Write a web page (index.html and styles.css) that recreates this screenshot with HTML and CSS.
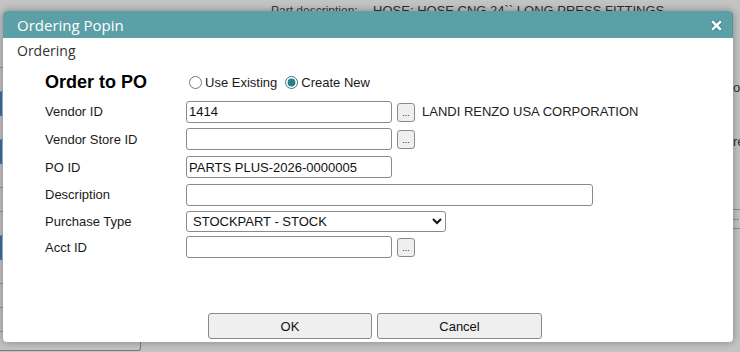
FILE: index.html
```html
<!DOCTYPE html>
<html lang="en">
<head>
  <meta charset="UTF-8">
  <title>Ordering Popin</title>
  <link rel="stylesheet" href="styles.css">
</head>
<body>

  <div class="page">
    <div class="page-top">
      <span class="page-label">Part description:</span>
      <span class="page-value">HOSE: HOSE CNG 24`` LONG PRESS FITTINGS</span>
    </div>
    <div class="page-main">
      <div class="page-left">
        <div class="strip-row"></div>
        <div class="strip-row"></div>
        <div class="strip-row blue"></div>
        <div class="strip-row"></div>
        <div class="strip-row blue"></div>
        <div class="strip-row"></div>
        <div class="strip-row"></div>
        <div class="strip-row"></div>
        <div class="strip-row blue"></div>
        <div class="strip-row"></div>
        <div class="strip-row"></div>
        <div class="strip-row"></div>
      </div>
      <div class="page-right">
        <div class="frag frag-pos">os</div>
        <div class="frag frag-store">re</div>
        <div class="frag-line"><span>..</span></div>
      </div>
    </div>
    <div class="page-bottom">
      <div class="bottom-box"></div>
    </div>
  </div>

  <div class="dialog">
    <div class="titlebar">
      <span class="title">Ordering Popin</span>
      <svg class="close" width="11" height="11" viewBox="0 0 11 11">
        <path d="M2 2 L9 9 M9 2 L2 9" stroke="#2f7d85" stroke-width="4.4" stroke-linecap="square"/>
        <path d="M2 2 L9 9 M9 2 L2 9" stroke="#ffffff" stroke-width="2.6" stroke-linecap="square"/>
      </svg>
    </div>

    <div class="dialog-body">
      <div class="section">Ordering</div>

      <div class="form">
        <div class="heading">Order to PO</div>
        <div class="radios">
          <input type="radio" name="mode" id="use-existing">
          <label for="use-existing">Use Existing</label>
          <input type="radio" name="mode" id="create-new" checked>
          <label for="create-new">Create New</label>
        </div>

        <div class="label">Vendor ID</div>
        <div class="field">
          <input class="text" type="text" value="1414">
          <button class="lookup">...</button>
          <span class="vendor-name">LANDI RENZO USA CORPORATION</span>
        </div>

        <div class="label">Vendor Store ID</div>
        <div class="field">
          <input class="text" type="text">
          <button class="lookup">...</button>
        </div>

        <div class="label">PO ID</div>
        <div class="field">
          <input class="text" type="text" value="PARTS PLUS-2026-0000005">
        </div>

        <div class="label">Description</div>
        <div class="field">
          <input class="text wide" type="text">
        </div>

        <div class="label">Purchase Type</div>
        <div class="field">
          <select class="select">
            <option>STOCKPART - STOCK</option>
          </select>
        </div>

        <div class="label">Acct ID</div>
        <div class="field">
          <input class="text" type="text">
          <button class="lookup">...</button>
        </div>
      </div>
    </div>

    <div class="dialog-footer">
      <button class="action">OK</button>
      <button class="action">Cancel</button>
    </div>
  </div>

</body>
</html>
```

FILE: styles.css
```css
body {
  margin: 0;
  padding: 0;
  width: 740px;
  height: 352px;
  overflow: hidden;
  background: #c4c4c4;
  font-family: "Liberation Sans", Arial, sans-serif;
}

/* page behind the popin */
.page {
  height: 352px;
  display: flex;
  flex-direction: column;
  color: #2e2e2e;
}

.page-top {
  height: 20px;
  padding-top: 3px;
  font-size: 12px;
  box-sizing: border-box;
}

.page-label {
  margin-left: 271px;
  color: #3a3a3a;
}

.page-value {
  margin-left: 12px;
  font-size: 13px;
}

.page-main {
  flex: 1;
  display: flex;
  justify-content: space-between;
}

.page-left {
  width: 6px;
  padding-top: 24px;
}

.strip-row {
  height: 23px;
  border-bottom: 1px solid #9a9a9a;
}

.strip-row.blue {
  border-left: 2px solid #3a6fa8;
}

.page-right {
  width: 7px;
  font-size: 13px;
  overflow: hidden;
}

.frag {
  white-space: nowrap;
}

.frag-pos {
  margin-top: 60px;
}

.frag-store {
  margin-top: 39px;
}

.frag-line {
  margin-top: 60px;
  height: 18px;
  border-top: 1px solid #8c8c8c;
  border-bottom: 1px solid #8c8c8c;
  color: #9a3a3a;
  font-size: 11px;
}

.page-bottom {
  height: 12px;
}

.bottom-box {
  width: 140px;
  height: 10px;
  border-right: 1px solid #7a7a7a;
  border-bottom: 1px solid #7a7a7a;
  border-bottom-right-radius: 3px;
}

/* popin */
.dialog {
  position: absolute;
  left: 3px;
  top: 11px;
  width: 730px;
  height: 331px;
  background: #ffffff;
  border-radius: 4px;
  box-shadow: 0 0 9px rgba(0, 0, 0, 0.35);
  display: flex;
  flex-direction: column;
}

.titlebar {
  height: 27px;
  background: #5ba0a7;
  border-radius: 4px 4px 0 0;
  border-right: 1px solid #4a98a0;
  display: flex;
  align-items: center;
  justify-content: space-between;
  padding: 0 10px 0 14px;
}

.title {
  color: #ffffff;
  font-family: "Open Sans", "Noto Sans", sans-serif;
  font-size: 15px;
  margin-top: 1px;
}

.close {
  display: block;
  margin-top: 1px;
}

.dialog-body {
  padding: 4px 0 0 14px;
}

.section {
  font-family: "Open Sans", "Noto Sans", sans-serif;
  font-size: 14px;
  color: #333;
  line-height: 18px;
}

.form {
  margin: 7px 0 0 28px;
  display: grid;
  grid-template-columns: 141px 1fr;
  grid-template-rows: 31px 27px 28px 28px 27px 26px 26px;
  align-items: center;
  font-size: 13px;
  color: #1a1a1a;
}

.heading {
  font-size: 18px;
  font-weight: bold;
  color: #000;
}

.radios {
  display: flex;
  align-items: center;
}

.radios input {
  margin: 0 3px 0 3px;
  width: 13px;
  height: 13px;
  accent-color: #2c7d86;
}

.radios label {
  margin-right: 5px;
}

.field {
  display: flex;
  align-items: center;
}

.text {
  box-sizing: border-box;
  width: 206px;
  height: 22px;
  padding: 1px 2px;
  border: 1px solid #8a8a8a;
  border-radius: 3px;
  font-family: "Liberation Sans", Arial, sans-serif;
  font-size: 13px;
  color: #111;
  margin: 0;
}

.text.wide {
  width: 407px;
}

.lookup {
  box-sizing: border-box;
  width: 18px;
  height: 19px;
  margin: 1px 0 0 5px;
  padding: 0 0 3px;
  border: 1px solid #8a8a8a;
  border-radius: 3px;
  background: #efefef;
  font-family: "Liberation Sans", Arial, sans-serif;
  font-size: 9px;
  line-height: 9px;
  color: #222;
  display: flex;
  align-items: flex-end;
  justify-content: center;
}

.vendor-name {
  margin-left: 7px;
  color: #222;
}

.select {
  box-sizing: border-box;
  width: 260px;
  height: 21px;
  margin: 0;
  border: 1px solid #8a8a8a;
  border-radius: 3px;
  background: #fff;
  font-family: "Liberation Sans", Arial, sans-serif;
  font-size: 13px;
  color: #111;
  padding: 0 0 0 2px;
}

.dialog-footer {
  margin-top: auto;
  padding: 0 0 3px 205px;
  display: flex;
  gap: 5px;
}

.action {
  box-sizing: border-box;
  width: 164px;
  height: 26px;
  border: 1px solid #8a8a8a;
  border-radius: 3px;
  background: #efefef;
  font-family: "Liberation Sans", Arial, sans-serif;
  font-size: 13px;
  color: #111;
}

.action + .action {
  width: 165px;
}
```
